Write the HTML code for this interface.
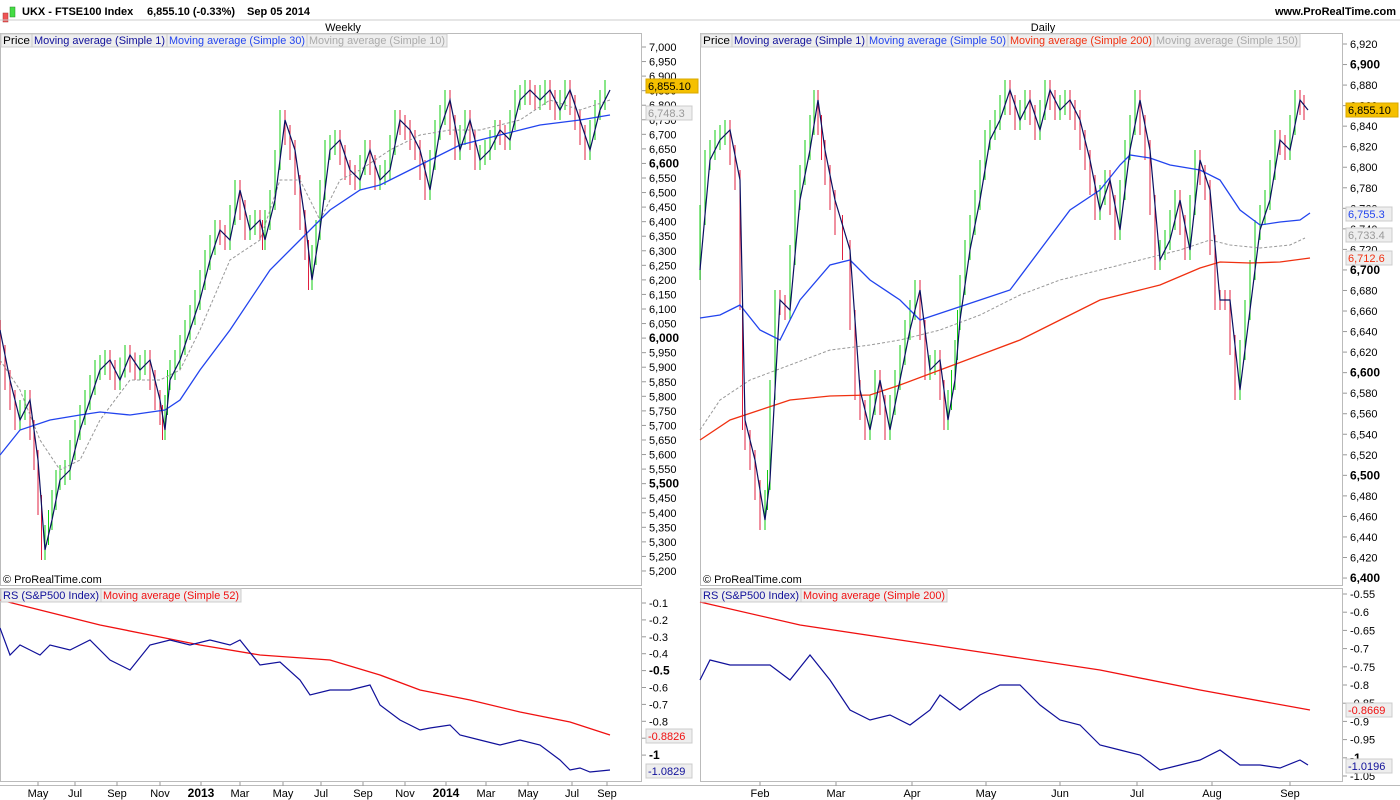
<!DOCTYPE html>
<html><head><meta charset="utf-8"><style>
body{margin:0;width:1400px;height:800px;overflow:hidden;background:#fff;font-family:"Liberation Sans",sans-serif}
svg{position:absolute;left:0;top:0}
text{font-family:"Liberation Sans",sans-serif;font-size:11px}
</style></head><body>
<svg id="s" width="1400" height="800" xmlns="http://www.w3.org/2000/svg">
<rect x="3" y="13" width="5" height="9" fill="#e55" stroke="#a33" stroke-width="0.5"/>
<rect x="10" y="7" width="5" height="10" fill="#4d4" stroke="#282" stroke-width="0.5"/>
<text x="22" y="15" style="font-size:11px;font-weight:bold">UKX - FTSE100 Index</text>
<text x="147" y="15" style="font-size:11px;font-weight:bold">6,855.10 (-0.33%)</text>
<text x="247" y="15" style="font-size:11px;font-weight:bold">Sep 05 2014</text>
<text x="1396" y="15" text-anchor="end" style="font-size:11px;font-weight:bold">www.ProRealTime.com</text>
<line x1="0" y1="20" x2="1400" y2="20" stroke="#ccc"/>
<text x="343" y="31" text-anchor="middle">Weekly</text>
<text x="1043" y="31" text-anchor="middle">Daily</text>
<g fill="none" stroke="#bbb">
<rect x="0.5" y="33.5" width="641" height="552"/>
<rect x="700.5" y="33.5" width="642" height="552"/>
<rect x="0.5" y="588.5" width="641" height="193"/>
<rect x="700.5" y="588.5" width="642" height="193"/>
<line x1="0" y1="785.5" x2="1400" y2="785.5"/>
</g>
<g id="g"></g>
</svg>
<script>
var g=document.getElementById('g'),h='';
function pl(p,c,w,d){h+='<polyline fill="none" stroke="'+c+'" stroke-width="'+(w||1)+'" '+(d?'stroke-dasharray="3,2"':'')+' points="'+p.join(' ')+'"/>';}
function T(x,y,t,o){h+='<text x="'+x+'" y="'+y+'" '+(o||'')+'>'+t+'</text>';}
function bars(p){var a=p.split(' ');for(var i=1;i<a.length;i++){var q=a[i-1].split(','),r=a[i].split(',');var x0=+q[0],y0=+q[1],x1=+r[0],y1=+r[1];for(var k=0;k<2;k++){var x=x0+(x1-x0)*k/2,y=y0+(y1-y0)*k/2,yn=y0+(y1-y0)*(k+1)/2;var up=yn<y;h+='<line x1="'+x.toFixed(1)+'" x2="'+x.toFixed(1)+'" y1="'+(Math.min(y,yn)-10)+'" y2="'+(Math.max(y,yn)+10)+'" stroke="'+(up?'#1c1':'#e02040')+'"/>';}}}
var LP="0,330 10,380 20,420 30,400 38,460 45,550 52,520 60,480 70,470 80,430 90,400 100,370 110,360 120,380 130,355 140,370 150,360 160,400 165,430 170,380 180,360 190,330 200,300 210,260 220,230 230,240 240,190 250,230 260,220 265,240 275,200 285,120 295,150 305,220 312,280 320,230 330,150 340,140 350,170 360,180 370,150 380,180 390,170 400,120 410,130 420,150 430,190 440,130 450,100 460,150 470,120 480,160 490,150 500,130 510,140 520,100 530,90 540,100 550,90 560,110 570,90 580,120 590,150 600,110 610,90";
var RP="700,270 710,160 720,140 730,130 740,180 745,420 755,460 765,520 770,480 780,300 790,310 800,200 810,150 818,100 825,150 835,200 850,250 860,390 870,430 880,380 890,430 900,380 910,330 920,290 930,370 940,360 948,420 955,380 960,320 970,250 980,200 990,140 1000,120 1010,90 1020,120 1030,100 1040,130 1050,90 1060,110 1070,100 1080,120 1090,160 1100,210 1110,180 1120,230 1130,150 1140,100 1150,150 1160,260 1170,240 1180,200 1190,250 1200,160 1210,190 1220,300 1230,300 1240,390 1250,310 1260,230 1270,200 1280,140 1290,150 1300,100 1308,110";
bars(LP);bars(RP);
pl(["0,360","20,390","40,440","60,470","80,460","100,420","130,380","160,380","180,370","200,330","230,260","260,240","280,180","300,180","320,220","340,180","360,170","390,150","420,135","450,130","480,130","520,120","550,100","580,110","610,100"],'#999',1,1);
pl(["0,455","20,430","50,420","80,415","100,412","130,415","165,410","180,400","200,370","230,330","270,270","300,240","330,210","360,190","380,185","400,175","430,160","460,145","500,135","540,125","580,120","610,115"],'#2244ee',1.3);
pl(LP.split(' '),'#0a1060',1.2);
pl(["700,430","720,400","750,380","790,365","830,350","870,345","900,340","940,330","980,315","1020,295","1060,280","1100,270","1140,260","1180,250","1210,240","1230,245","1260,248","1290,245","1305,238"],'#999',1,1);
pl(["700,440","730,420","760,410","790,400","830,396","870,395","900,385","940,370","980,355","1020,340","1060,320","1100,300","1140,290","1160,285","1200,268","1220,262","1250,263","1280,262","1310,258"],'#f03010',1.3);
pl(["700,318","720,315","740,305","760,330","780,340","800,300","830,265","850,260","870,280","900,300","920,320","950,310","980,300","1010,290","1040,250","1070,210","1100,190","1120,165","1130,155","1150,158","1170,165","1200,170","1220,180","1240,210","1260,225","1280,222","1300,220","1310,213"],'#2244ee',1.3);
pl(RP.split(' '),'#0a1060',1.2);
pl(["0,600","40,610","100,625","150,635","200,645","260,655","330,660","380,675","420,690","470,700","520,712","570,722","610,735"],'#f01010',1.3);
pl(["0,628","10,655","20,645","30,650","40,655","50,645","70,650","90,640","110,660","130,670","150,645","170,640","190,645","210,640","230,645","240,640","260,665","280,662","300,680","310,695","330,690","350,690","370,685","380,705","400,720","420,730","430,728","450,725","460,735","480,740","500,745","520,740","540,745","560,760","570,770","580,768","590,772","610,770"],'#10109a',1.2);
pl(["700,602","800,625","900,640","1000,655","1100,670","1200,690","1310,710"],'#f01010',1.3);
pl(["700,680","710,660","730,665","750,665","770,665","790,680","810,655","830,680","850,710","870,720","890,715","910,725","930,710","940,695","960,710","980,695","1000,685","1020,685","1040,705","1060,720","1080,725","1100,745","1120,750","1140,755","1160,770","1180,765","1200,760","1220,750","1240,765","1260,765","1280,768","1300,760","1308,765"],'#10109a',1.2);
function lab(ax,y,t,b){h+='<line x1="'+ax+'" x2="'+(ax+4)+'" y1="'+y+'" y2="'+y+'" stroke="#999"/>';T(ax+7,y+4,t,b?'style="font-size:12px;font-weight:bold"':'');}
function fmt(v){var s=String(v);return s.length>3?s.slice(0,-3)+','+s.slice(-3):s;}
for(var v=7000;v>=5200;v-=50){var y=47+(7000-v)*0.2911;lab(642,y,fmt(v),v==6600||v==6000||v==5500);}
for(var v=6920;v>=6400;v-=20){var y=44+(6920-v)*1.027;lab(1343,y,fmt(v),v%100==0&&v!=6800);}
for(var i=1;i<=10;i++){var y=603+(i-1)*16.9;lab(642,y,i==10?'-1':'-0.'+i,i==5||i==10);}
var rl=['-0.55','-0.6','-0.65','-0.7','-0.75','-0.8','-0.85','-0.9','-0.95','-1','-1.05'];
for(var i=0;i<rl.length;i++){lab(1343,594+i*18.2,rl[i],rl[i]=='-1');}
function tag(x,y,t,bg,c,bd){h+='<rect x="'+x+'" y="'+(y-7)+'" width="'+(t.length*6+4)+'" height="14" fill="'+bg+'" stroke="'+bd+'"/>';T(x+2,y+4,t,'fill="'+c+'"');}
tag(646,86,'6,855.10','#f5c000','#000','#d9a800');tag(646,113,'6,748.3','#eee','#999','#ccc');
tag(1346,110,'6,855.10','#f5c000','#000','#d9a800');tag(1346,214,'6,755.3','#eee','#2244ee','#ccc');
tag(1346,235,'6,733.4','#eee','#999','#ccc');tag(1346,258,'6,712.6','#eee','#f03010','#ccc');
tag(646,736,'-0.8826','#eee','#f01010','#ccc');tag(646,771,'-1.0829','#eee','#10109a','#ccc');
tag(1346,710,'-0.8669','#eee','#f01010','#ccc');tag(1346,766,'-1.0196','#eee','#10109a','#ccc');
function leg(x,y,items){for(var i=0;i<items.length;i++){var w=items[i][2];h+='<rect x="'+x+'" y="'+y+'" width="'+w+'" height="13" fill="#eee" stroke="#ccc"/>';T(x+2,y+10,items[i][0],'fill="'+items[i][1]+'" textLength="'+(w-4)+'" lengthAdjust="spacingAndGlyphs"');x+=w;}}
leg(1,34,[['Price','#000',31],['Moving average (Simple 1)','#10109a',135],['Moving average (Simple 30)','#2244ee',140],['Moving average (Simple 10)','#aaa',140]]);
leg(701,34,[['Price','#000',31],['Moving average (Simple 1)','#10109a',135],['Moving average (Simple 50)','#2244ee',141],['Moving average (Simple 200)','#f03010',146],['Moving average (Simple 150)','#aaa',146]]);
leg(1,589,[['RS (S&amp;P500 Index)','#10109a',100],['Moving average (Simple 52)','#f01010',140]]);
leg(701,589,[['RS (S&amp;P500 Index)','#10109a',100],['Moving average (Simple 200)','#f01010',146]]);
T(3,583,'© ProRealTime.com');T(703,583,'© ProRealTime.com');
var xl=[[38,'May'],[75,'Jul'],[117,'Sep'],[160,'Nov'],[201,'2013',1],[240,'Mar'],[283,'May'],[321,'Jul'],[363,'Sep'],[405,'Nov'],[446,'2014',1],[486,'Mar'],[528,'May'],[572,'Jul'],[607,'Sep'],[760,'Feb'],[836,'Mar'],[912,'Apr'],[986,'May'],[1060,'Jun'],[1137,'Jul'],[1212,'Aug'],[1290,'Sep']];
for(var i=0;i<xl.length;i++){var a=xl[i];h+='<line x1="'+a[0]+'" x2="'+a[0]+'" y1="782" y2="786" stroke="#999"/>';T(a[0],797,a[1],'text-anchor="middle" '+(a[2]?'style="font-size:12px;font-weight:bold"':''));}
g.innerHTML=h;
</script>
</body></html>
